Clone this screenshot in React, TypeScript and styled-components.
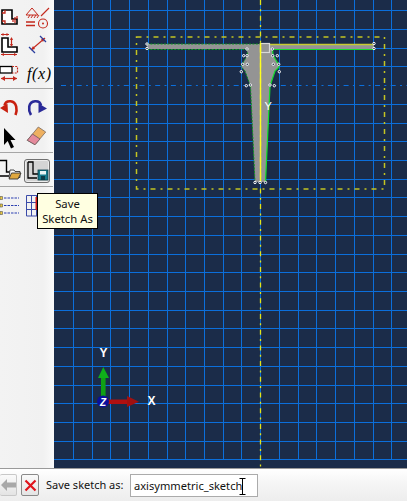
import React from "react";
import styled, { createGlobalStyle } from "styled-components";

const Global = createGlobalStyle`
  html, body { margin: 0; padding: 0; background: #f0f0f0; }
  body { width: 407px; height: 501px; overflow: hidden; font-family: "Noto Sans", "Liberation Sans", sans-serif; }
`;

const Page = styled.div`
  position: relative;
  width: 407px;
  height: 501px;
  display: flex;
  flex-direction: column;
  overflow: hidden;
`;
const Main = styled.div`
  display: flex;
  height: 468px;
`;
const Toolbar = styled.div`
  width: 54px;
  flex: none;
  display: flex;
  flex-direction: column;
  background: linear-gradient(90deg, #f3f3f3 0%, #f1f1f1 80%, #fafafa 100%);
  box-sizing: border-box;
`;
const ToolGroup = styled.div<{ $top: number }>`
  display: flex;
  flex-direction: column;
  padding-top: ${(p) => p.$top}px;
`;
const ToolRow = styled.div`
  display: flex;
  height: 28px;
`;
const ToolCell = styled.div<{ $wide?: boolean }>`
  width: ${(p) => (p.$wide ? 30 : 24)}px;
  height: 28px;
  flex: none;
  svg { display: block; overflow: visible; }
`;
const ActiveTool = styled.div`
  width: 26px;
  height: 24px;
  margin-top: 1px;
  box-sizing: border-box;
  border: 1px solid #707070;
  border-radius: 3px;
  background: #d4d4d4;
  box-shadow: inset 0 0 0 1px #ececec;
  svg { display: block; overflow: visible; }
`;
const Separator = styled.div`
  height: 1px;
  margin-right: 1px;
  background: #a6a6a6;
`;
const FxLabel = styled.div`
  font-family: "Liberation Serif", serif;
  font-style: italic;
  font-weight: 400;
  font-size: 16px;
  line-height: 27px;
  padding-left: 3px;
  color: #000;
  letter-spacing: 0.6px;
  white-space: nowrap;
`;
const Viewport = styled.div`
  flex: 1;
  background: #1b2c49;
  svg { display: block; }
`;
const AxisText = styled.text<{ $mark?: boolean }>`
  font-family: "Liberation Sans", sans-serif;
  font-weight: ${(p) => (p.$mark ? 400 : 700)};
  font-size: ${(p) => (p.$mark ? 11 : 12)}px;
  fill: #fff;
`;
const AxisInitial = styled.text`
  font-family: "Liberation Sans", sans-serif;
  font-weight: 700;
  font-style: italic;
  font-size: 10px;
  fill: #fff;
`;
const Tooltip = styled.div`
  position: absolute;
  left: 37px;
  top: 193px;
  width: 61px;
  height: 36px;
  box-sizing: border-box;
  border: 1px solid #000;
  background: #ffffe1;
  color: #111;
  font-size: 11.3px;
  line-height: 15px;
  text-align: center;
  padding-top: 2px;
`;
const BottomBar = styled.div`
  height: 33px;
  box-sizing: border-box;
  border-top: 1px solid #9a9a9a;
  background: linear-gradient(180deg, #ffffff 0%, #f6f6f6 40%, #ededed 100%);
  display: flex;
  align-items: flex-start;
  padding-top: 5px;
`;
const PromptButton = styled.div<{ $disabled?: boolean }>`
  width: ${(p) => (p.$disabled ? 17 : 18)}px;
  height: 22px;
  margin-right: ${(p) => (p.$disabled ? 4 : 7)}px;
  box-sizing: border-box;
  border: 1px solid ${(p) => (p.$disabled ? "#c8c8c8" : "#8a8a8a")};
  border-left-width: ${(p) => (p.$disabled ? 0 : 1)}px;
  border-radius: 2px;
  background: linear-gradient(180deg, #fafafa, #e4e4e4);
  display: flex;
  align-items: center;
  justify-content: center;
`;
const PromptLabel = styled.div`
  font-size: 11px;
  line-height: 22px;
  color: #111;
  width: 84px;
  white-space: nowrap;
`;
const PromptInput = styled.div`
  position: relative;
  width: 128px;
  height: 23px;
  box-sizing: border-box;
  border: 1px solid #ababab;
  background: #fff;
  font-size: 11.1px;
  line-height: 21px;
  padding-left: 3px;
  color: #111;
  white-space: nowrap;
`;
const IBeam = styled.svg`
  position: absolute;
  left: 108px;
  top: 3px;
`;

const RED = "#c4281c";
const BLUE = "#2b3f9e";

const range = (n: number) => Array.from({ length: n }, (_, i) => i);
const gridX = range(19).map((i) => Math.round(73 + 18.72 * i) + 0.5);
const gridY = range(25)
  .map((i) => 10.3 + 18.71 * i)
  .map((v) => Math.round(v) + 0.5)
  .filter((v) => v !== 85.5);

const verts: [number, number][] = [
  [147, 44], [147, 48.5], [247, 49], [243.7, 55.7], [247, 55.7], [242.7, 64.3], [247.3, 64.3],
  [241.3, 71.7], [246.3, 85.7], [250.3, 85], [272.3, 49], [272.7, 55.7], [277.3, 55.7],
  [273.3, 64.3], [278.7, 64.3], [279.3, 71.7], [274.3, 85.7], [270, 85], [374, 43.5], [374, 48.5],
  [255, 182.5], [260, 182.5], [265.5, 182.5],
];

const Sketch = () => (
  <svg width="353" height="468" viewBox="54 0 353 468">
    <g shapeRendering="crispEdges" stroke="#0b6fdc" strokeWidth="1">
      {gridX.map((x) => <line key={x} x1={x} x2={x} y1={0} y2={459} />)}
      {gridY.map((y) => <line key={y} x1={54} x2={407} y1={y} y2={y} />)}
    </g>
    <line x1="61" x2="407" y1="85.5" y2="85.5" stroke="#0b6fdc" strokeDasharray="5 4.3 2 4.4" />
    <polygon
      points="147,44 374,44 374,49 272.5,49 273,55 278.5,64.5 279,67 275,71 270,86 265.5,182 255,182 250.5,86 245,71 241.5,67 242,64.5 247.5,55 247,49 147,49"
      fill="#949494"
    />
    <path d="M147 44H260M147 49.5H247M247 49L247.5 55L242 64.5L241.5 67L245 71L250.5 86L255 182" fill="none" stroke="#0c9a1e" strokeWidth="1" strokeDasharray="2 1.4" />
    <path d="M269 44.5H374" fill="none" stroke="#c6cc30" strokeWidth="1.6" />
    <path d="M273 49.5H374M272.5 49L273 55L278.5 64.5L279 67L275 71L270 86L265.5 182" fill="none" stroke="#12e02a" strokeWidth="1.2" />
    <rect x="260.5" y="43.5" width="9" height="9" fill="none" stroke="#d8d8d8" strokeWidth="1.2" />
    <line x1="260.5" x2="260.5" y1="0" y2="468" stroke="#e4e41a" strokeWidth="1.3" strokeDasharray="5 4.3 2 4.4" />
    <line x1="260.5" x2="260.5" y1="43" y2="183" stroke="#ffff20" strokeWidth="1.4" />
    <rect x="136.5" y="37" width="248" height="152" fill="none" stroke="#c4c422" strokeWidth="1.5" strokeDasharray="5 5 2 5" />
    {verts.map(([x, y]) => (
      <circle key={`${x}-${y}`} cx={x} cy={y} r="1.2" fill="#1b2c49" stroke="#fff" strokeWidth="1" />
    ))}
    <AxisText $mark x="264.5" y="110">Y</AxisText>
    <AxisText x="103.5" y="357" textAnchor="middle">Y</AxisText>
    <AxisText x="151.5" y="405" textAnchor="middle">X</AxisText>
    <rect x="101" y="377" width="4.6" height="20" fill="#10a015" />
    <polygon points="103.3,367 109,378 98,378" fill="#0fb01a" />
    <rect x="108" y="399.5" width="20" height="4.5" fill="#b01010" />
    <polygon points="127,396 139,401.7 127,407" fill="#a01010" />
    <circle cx="103" cy="401.5" r="6" fill="#0a0f9c" />
    <AxisInitial x="103" y="405.5" textAnchor="middle">Z</AxisInitial>
  </svg>
);

const Icon = ({ w = 24, top, left = 0, children }: { w?: number; top: number; left?: number; children: React.ReactNode }) => (
  <svg width={w} height={28} viewBox={`${left} ${top} ${w} 28`}>{children}</svg>
);

export default function App() {
  return (
    <Page>
      <Global />
      <Main>
        <Toolbar>
          <ToolGroup $top={4}>
            <ToolRow>
              <ToolCell>
                <Icon top={4}>
                  <path d="M2 10H12V19H17V24H2Z" fill="#fff" stroke="#000" strokeWidth="1.6" />
                  <path d="M2 13H5V10M2 21H5V24M13 19V22M15 23V17M17 16V19" fill="none" stroke={RED} strokeWidth="1.3" />
                </Icon>
              </ToolCell>
              <ToolCell $wide>
                <Icon w={30} left={24} top={4}>
                  <path d="M26 15L32 8L38 15Z" fill="none" stroke={RED} strokeWidth="1" />
                  <path d="M28 18L30 15M31 18L33 15M34 18L36 15M37 18L39 15" stroke={RED} strokeWidth="1" />
                  <path d="M41 16L49 8" stroke={RED} strokeWidth="1.1" />
                  <path d="M26 22H35M26 25.5H35" stroke={RED} strokeWidth="1.5" />
                  <circle cx="43" cy="23.5" r="4.5" fill="none" stroke={RED} strokeWidth="1.1" />
                  <circle cx="43" cy="23.5" r="1" fill={RED} />
                </Icon>
              </ToolCell>
            </ToolRow>
            <ToolRow>
              <ToolCell>
                <Icon top={32}>
                  <path d="M2 38H8V47H17V52H2Z" fill="#fff" stroke="#000" strokeWidth="1.6" />
                  <path d="M1 34.5H9M11.5 38V46M1 54.5H17" stroke={RED} strokeWidth="1.2" />
                  <path d="M1 34.5L3.5 33V36ZM9 34.5L6.5 33V36ZM11.5 37L10 40H13ZM11.5 47L10 44H13ZM1 54.5L4 53V56ZM17 54.5L14 53V56Z" fill={RED} />
                </Icon>
              </ToolCell>
              <ToolCell $wide>
                <Icon w={30} left={24} top={32}>
                  <path d="M31 50L45 38" stroke={RED} strokeWidth="1.1" />
                  <path d="M31 50L35 49L33 46ZM45 38L41 39L43 42Z" fill={RED} />
                  <path d="M29 47L35 53M40 36L46 42" stroke={BLUE} strokeWidth="1.3" />
                </Icon>
              </ToolCell>
            </ToolRow>
            <ToolRow>
              <ToolCell>
                <Icon top={60}>
                  <rect x="0" y="66.5" width="12" height="6.5" fill="#fff" stroke="#000" strokeWidth="1.3" />
                  <path d="M12 66.5H17.5V73H12" fill="none" stroke={RED} strokeWidth="1.2" strokeDasharray="2 1.2" />
                  <path d="M1 78.5H17" stroke={RED} strokeWidth="1.2" />
                  <path d="M1 78.5L5 76V81ZM17 78.5L13 76V81Z" fill={RED} />
                </Icon>
              </ToolCell>
              <ToolCell $wide><FxLabel>f(x)</FxLabel></ToolCell>
            </ToolRow>
          </ToolGroup>
          <Separator />
          <ToolGroup $top={7}>
            <ToolRow>
              <ToolCell>
                <Icon top={96}>
                  <path d="M15.5 115C17.5 110 17 102 10.5 101.3C7 101 5 103 4.5 105.5" fill="none" stroke="#c8200f" strokeWidth="2.6" />
                  <path d="M0 108L7.5 103.5L8 113Z" fill="#c8200f" />
                </Icon>
              </ToolCell>
              <ToolCell $wide>
                <Icon w={30} left={24} top={96}>
                  <path d="M31 115C28 110 28 102 35 101.3C38.5 101 40.5 103 41 105.5" fill="none" stroke="#2a2a98" strokeWidth="2.6" />
                  <path d="M47 108.5L38.5 103.5L38.5 113Z" fill="#2a2a98" />
                </Icon>
              </ToolCell>
            </ToolRow>
            <ToolRow>
              <ToolCell>
                <Icon top={124}>
                  <path d="M4 128L15.5 140H10.5L14 147L11 148.5L7.7 141L4 145Z" fill="#000" />
                </Icon>
              </ToolCell>
              <ToolCell $wide>
                <Icon w={30} left={24} top={124}>
                  <path d="M27.3 140.3L38.3 127L45.7 132L35 144.7Z" fill="#eeb060" stroke="#7a6a60" strokeWidth="0.8" />
                  <path d="M27.3 140.3L32.5 134L40 139L35 144.7Z" fill="#e58a9c" stroke="#6a5a60" strokeWidth="0.8" />
                </Icon>
              </ToolCell>
            </ToolRow>
          </ToolGroup>
          <Separator />
          <ToolGroup $top={5}>
            <ToolRow>
              <ToolCell>
                <Icon top={158}>
                  <path d="M0 160.5H6.5V172H10M0 176H9" fill="none" stroke="#000" strokeWidth="1.4" />
                  <path d="M10 170H14L15 171.5H20V177.5H9Z" fill="#fff" stroke="#333" strokeWidth="0.9" />
                  <path d="M9 179L11.5 173H21L18 179Z" fill="#e0a840" stroke="#333" strokeWidth="0.9" />
                </Icon>
              </ToolCell>
              <ActiveTool>
                <svg width="24" height="22" viewBox="25 160 24 22">
                  <path d="M28 162H33V174H38M28 162V178H37" fill="none" stroke="#000" strokeWidth="1.3" />
                  <rect x="38" y="170" width="10" height="10" fill="#157a8c" stroke="#0c3c48" strokeWidth="0.8" />
                  <rect x="40" y="171" width="6" height="3.5" fill="#e8f4f4" />
                  <rect x="41" y="176" width="4" height="4" fill="#0c3c48" />
                </svg>
              </ActiveTool>
            </ToolRow>
          </ToolGroup>
          <Separator />
          <ToolGroup $top={3}>
            <ToolRow>
              <ToolCell>
                <Icon top={190}>
                  <path d="M0 196.5H2.5V199.5H0ZM0 204H2.5V207H0ZM0 211.5H2.5V214.5H0Z" fill="#e8c840" stroke="#555" strokeWidth="0.6" />
                  <path d="M4 198H19M4 205.5H19M4 213H19" stroke="#2b3fb0" strokeWidth="1" strokeDasharray="2.5 1" />
                </Icon>
              </ToolCell>
              <ToolCell $wide>
                <Icon w={30} left={24} top={190}>
                  <path d="M26.5 195.5H40V216H26.5ZM31.5 195.5V216M36.5 195.5V216M26.5 202.5H40M26.5 209.5H40" fill="none" stroke="#3a4aa8" strokeWidth="1" />
                  <path d="M36.5 197V210" stroke="#d01818" strokeWidth="2" />
                </Icon>
              </ToolCell>
            </ToolRow>
          </ToolGroup>
        </Toolbar>
        <Viewport>
          <Sketch />
        </Viewport>
      </Main>
      <BottomBar>
        <PromptButton $disabled>
          <svg width="15" height="12" viewBox="0 0 15 12">
            <path d="M0 6L6 0V3.5H15V8.5H6V12Z" fill="#a8a8a8" />
          </svg>
        </PromptButton>
        <PromptButton>
          <svg width="13" height="13" viewBox="0 0 13 13">
            <path d="M1.5 1.5L11.5 11.5M11.5 1.5L1.5 11.5" stroke="#e0141c" strokeWidth="2.2" />
          </svg>
        </PromptButton>
        <PromptLabel>Save sketch as:</PromptLabel>
        <PromptInput>
          axisymmetric_sketch
          <IBeam width="7" height="17" viewBox="0 0 7 17">
            <path d="M0.5 0.5H6.5M3.5 0.5V16.5M0.5 16.5H6.5" fill="none" stroke="#000" strokeWidth="1" />
          </IBeam>
        </PromptInput>
      </BottomBar>
      <Tooltip>Save<br />Sketch As</Tooltip>
    </Page>
  );
}
